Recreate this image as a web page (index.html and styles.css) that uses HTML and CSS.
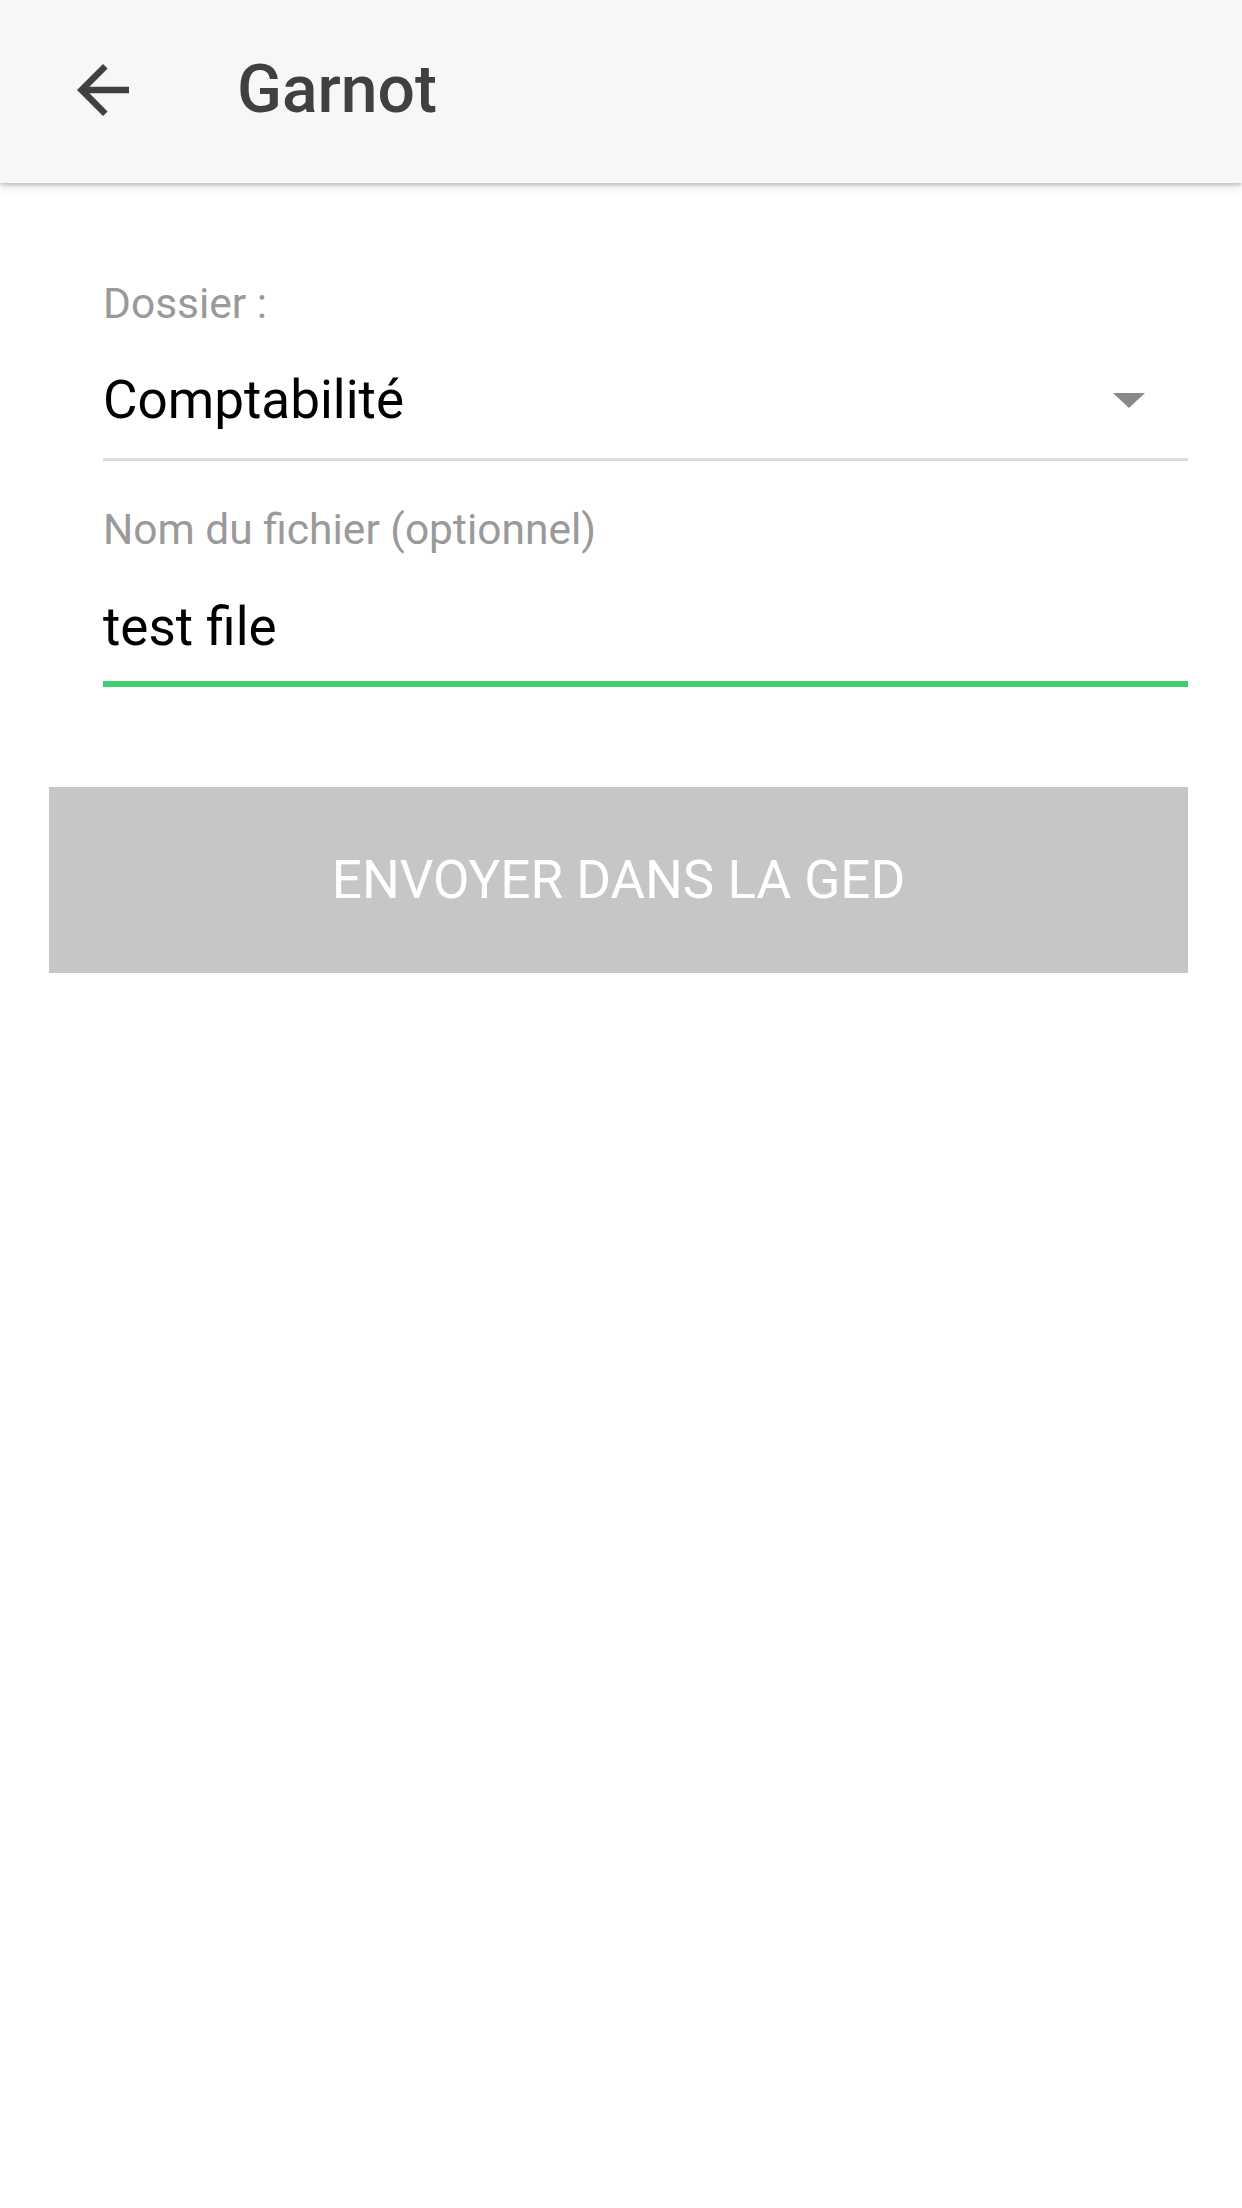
FILE: index.html
```html
<!DOCTYPE html>
<html lang="fr">
<head>
    <meta charset="UTF-8">
    <meta name="viewport" content="width=device-width, initial-scale=1.0">
    <title>Garnot</title>
    <link rel="stylesheet" href="styles.css">
</head>
<body>
    <header class="toolbar">
        <div class="back">
            <svg viewBox="0 0 24 24" width="78" height="78"><path d="M20 11H7.83l5.59-5.59L12 4l-8 8 8 8 1.41-1.41L7.83 13H20v-2z" fill="#404040"/></svg>
        </div>
        <h1 class="title">Garnot</h1>
    </header>

    <main class="form">
        <div class="field">
            <div class="field-label">Dossier :</div>
            <div class="field-value select">
                <span>Comptabilité</span>
                <span class="caret"></span>
            </div>
        </div>
        <div class="field">
            <div class="field-label">Nom du fichier (optionnel)</div>
            <div class="field-value input">test file</div>
        </div>
        <div class="send">ENVOYER DANS LA GED</div>
    </main>
</body>
</html>
```

FILE: styles.css
```css
body {
    margin: 0;
    background-color: #fff;
    font-family: Roboto, "Noto Sans", sans-serif;
    min-height: 2208px;
}
.toolbar {
    position: relative;
    z-index: 1;
    height: 183px;
    background-color: #f7f7f7;
    display: flex;
    align-items: center;
    box-shadow: 0 2px 4px rgba(0, 0, 0, 0.22), 0 5px 12px rgba(0, 0, 0, 0.08);
}
.back {
    width: 78px;
    height: 78px;
    margin-left: 64px;
    margin-bottom: 4px;
}
.back svg {
    display: block;
}
.title {
    margin: 0 0 3px 95px;
    font-size: 66px;
    line-height: 1;
    font-weight: 500;
    color: #404040;
}
.form {
    padding: 100px 54px 0 49px;
    display: flex;
    flex-direction: column;
}
.field {
    margin-left: 54px;
}
.field-label {
    font-size: 42.5px;
    line-height: 1;
    color: #9a9a9a;
}
.field-value {
    margin-top: 48px;
    font-size: 53px;
    line-height: 1;
    color: #000;
}
.select {
    display: flex;
    align-items: center;
    justify-content: space-between;
    padding-bottom: 31px;
    border-bottom: 3px solid #dcdcdc;
    margin-bottom: 48px;
}
.caret {
    width: 0;
    height: 0;
    margin-right: 43px;
    border-left: 16px solid transparent;
    border-right: 16px solid transparent;
    border-top: 15px solid #8a8a8a;
}
.input {
    margin-top: 50px;
    padding-bottom: 27px;
    border-bottom: 6px solid #3dd06c;
}
.send {
    margin-top: 100px;
    height: 186px;
    background-color: #c6c6c6;
    color: #fff;
    font-size: 53px;
    display: flex;
    align-items: center;
    justify-content: center;
}
```
